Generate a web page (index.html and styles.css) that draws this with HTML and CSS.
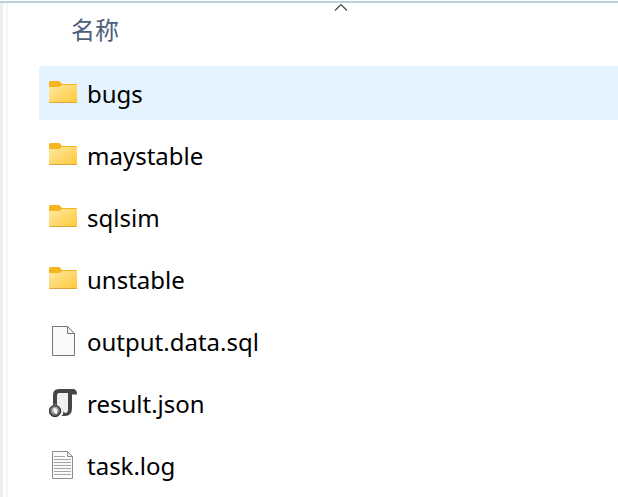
FILE: index.html
```
<!DOCTYPE html>
<html lang="zh-CN">
<head>
<meta charset="utf-8">
<title>文件</title>
<link rel="stylesheet" href="styles.css">
</head>
<body>
<svg class="defs" width="0" height="0" aria-hidden="true">
  <defs>
    <linearGradient id="folder-front" x1="0" y1="0" x2="1" y2="1">
      <stop offset="0" stop-color="#ffe8a3"/>
      <stop offset="1" stop-color="#ffc937"/>
    </linearGradient>
    <radialGradient id="gear" cx=".5" cy=".45" r=".55">
      <stop offset="0" stop-color="#f4f4f4"/>
      <stop offset=".35" stop-color="#c4c4c4"/>
      <stop offset=".65" stop-color="#777"/>
      <stop offset="1" stop-color="#303030"/>
    </radialGradient>
    <symbol id="folder" viewBox="0 0 28 30">
      <path d="M0 4.500q0-1.500 1.500-1.500h8q1 0 1.600.7L13 6h14q1 0 1 1v5H0z" fill="#f5b51e"/>
      <path d="M0 9h9.500q1 0 1.700-.7l.8-.6q.6-.7 1.600-.7H28v17q0 1-1 1H1q-1 0-1-1z" fill="url(#folder-front)"/>
      <path d="M0 23.500q0 1.500 1 1.500h26q1 0 1-1.500l-1 .5H1z" fill="#dda53b"/>
    </symbol>
    <symbol id="blank" viewBox="0 0 28 30">
      <path d="M3.500.5h15l7 7v22h-22z" fill="#fafafa" stroke="#777"/>
      <path d="M18.500.5v7h7z" fill="#f4f4f4" stroke="#777"/>
    </symbol>
    <symbol id="script" viewBox="0 0 28 30">
      <path d="M7 4h14v17q0 5-4 5H8z" fill="#f0f0f2"/>
      <path d="M4 17V7q0-6 6-6h14q4 0 4 5.500h-5V20q0 8-7 8h-4q3-1 2-5 1 2 3 2 2 0 2-5V5H10q-2 0-2 3v9z" fill="#454545"/>
      <circle cx="6" cy="23" r="6.500" fill="#e9e9e9"/>
      <circle cx="6" cy="23" r="5.700" fill="url(#gear)" stroke="#333"/>
      <path d="M4.500 20q3 0 3.500 3t-1 3q-2-1-2.500-6z" fill="#fff"/>
    </symbol>
    <symbol id="text" viewBox="0 0 28 30">
      <path d="M3.500 1.500h15l5 5v22h-20z" fill="#fafafa" stroke="#8c8c8c"/>
      <path d="M18.500 1.500v5h5z" fill="#eee" stroke="#8c8c8c"/>
      <path d="M5 6.500h11M5 9.500h17M5 12.500h17M5 15.500h17M5 18.500h17M5 21.500h17M5 24.500h17" stroke="#a5a8a9"/>
    </symbol>
  </defs>
</svg>
<main class="pane">
  <table class="files">
    <thead>
      <tr><th scope="col"><button class="sort" type="button">名称<svg class="chevron" viewBox="0 0 14 8" aria-hidden="true"><path d="M1 7.500l6-6 6 6"/></svg></button></th></tr>
    </thead>
    <tbody>
      <tr class="selected"><td><div class="file"><svg class="icon" aria-hidden="true"><use href="#folder"/></svg><span>bugs</span></div></td></tr>
      <tr><td><div class="file"><svg class="icon" aria-hidden="true"><use href="#folder"/></svg><span>maystable</span></div></td></tr>
      <tr><td><div class="file"><svg class="icon" aria-hidden="true"><use href="#folder"/></svg><span>sqlsim</span></div></td></tr>
      <tr><td><div class="file"><svg class="icon" aria-hidden="true"><use href="#folder"/></svg><span>unstable</span></div></td></tr>
      <tr><td><div class="file"><svg class="icon" aria-hidden="true"><use href="#blank"/></svg><span>output.data.sql</span></div></td></tr>
      <tr><td><div class="file"><svg class="icon" aria-hidden="true"><use href="#script"/></svg><span>result.json</span></div></td></tr>
      <tr><td><div class="file"><svg class="icon" aria-hidden="true"><use href="#text"/></svg><span>task.log</span></div></td></tr>
    </tbody>
  </table>
</main>
</body>
</html>
```
FILE: styles.css
```
* {
  box-sizing: border-box;
}

body {
  margin: 0;
  padding-top: 1px;
  background: #fff;
  color: #000;
  font-family: "Noto Sans", "Noto Sans CJK SC", sans-serif;
  font-size: 24px;
}

.defs {
  position: absolute;
}

.pane {
  min-height: calc(100vh - 1px);
  padding-left: 39px;
  border-top: 2px solid #b8cfdc;
  background: linear-gradient(to right, #eee 3px, #fff 3px, #fff 6px, #f7f7f7 6px, #f7f7f7 8px, #fff 8px);
}

.files {
  width: 100%;
  border-spacing: 0 8px;
}

th,
td {
  padding: 0;
  text-align: left;
}

th {
  height: 47px;
  vertical-align: top;
}

.sort {
  width: 100%;
  padding: 0 0 0 32px;
  border: 0;
  background: none;
  color: #4c607a;
  font: inherit;
  font-family: "Noto Sans CJK SC", sans-serif;
  font-weight: 400;
  line-height: 36px;
  text-align: left;
}

.chevron {
  position: absolute;
  top: 3px;
  left: 55%;
  width: 14px;
  height: 8px;
  margin-left: -6px;
  fill: none;
  stroke: #444;
  stroke-width: 1.2;
}

.file {
  display: flex;
  align-items: center;
  gap: 10px;
  height: 54px;
  padding-left: 10px;
  border-radius: 2px 0 0 2px;
}

.selected .file {
  background: #e5f3ff;
}

.icon {
  flex: none;
  width: 28px;
  height: 30px;
}
```
